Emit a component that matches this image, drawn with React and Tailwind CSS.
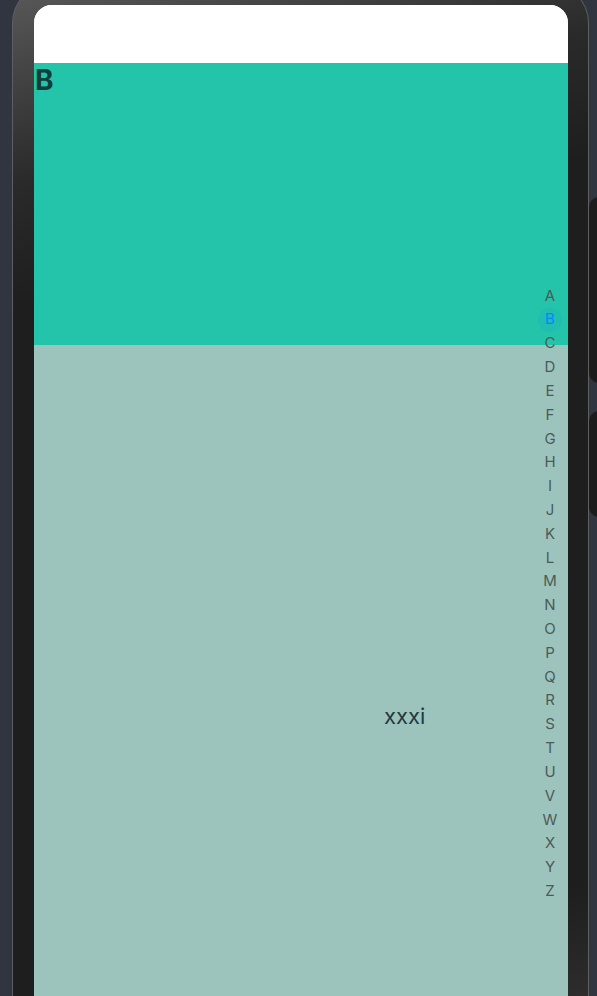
import React from 'react';

const LETTERS = 'ABCDEFGHIJKLMNOPQRSTUVWXYZ'.split('');

const IndexBar = ({ active = 'B' }) => (
  <div className="absolute right-0 top-[279px] w-[36px] flex flex-col items-center">
    {LETTERS.map((l) => (
      <div key={l} className="h-[23.82px] w-full flex items-center justify-center">
        {l === active ? (
          <span className="w-[24px] h-[24px] rounded-full bg-[#0a84ff]/10 text-[#0a84ff] text-[15px] flex items-center justify-center">
            {l}
          </span>
        ) : (
          <span className="text-[15px] text-[#4b5b58]">{l}</span>
        )}
      </div>
    ))}
  </div>
);

export default function App() {
  return (
    <div
      className="w-[597px] h-[996px] overflow-hidden bg-[#31353f] flex items-start pl-[12px]"
      style={{ fontFamily: 'Inter, "Noto Sans", sans-serif' }}
    >
      {/* phone body */}
      <div className="w-[577px] h-[1100px] -mt-[17px] shrink-0 rounded-[40px] border border-[#5f5f5f] bg-[linear-gradient(165deg,#5a5a5a_0%,#2a2a2a_16%,#1e1e1e_26%,#1e1e1e_84%,#3a3737_100%)] pl-[21px] pr-[19px] pt-[21px]">
        {/* screen */}
        <div className="relative w-[534px] h-[1100px] rounded-t-[18px] overflow-hidden bg-white">
          <div className="h-[58px] bg-white" />
          <div className="h-[282px] bg-[#23c4a9]">
            <div className="pl-px pt-[3px] text-[28px] font-bold leading-none text-[#0f3e3b]">B</div>
          </div>
          <div className="h-[800px] bg-[#9dc4bc] pl-[350px] pt-[355px]">
            <span className="text-[22px] text-[#1f3a42]">xxxi</span>
          </div>
          <IndexBar active="B" />
        </div>
      </div>
      {/* side keys */}
      <div className="flex flex-col shrink-0">
        <div className="mt-[197px] w-[12px] h-[186px] rounded-l-[10px] bg-[#1c1c1c]" />
        <div className="mt-[28px] w-[12px] h-[106px] rounded-l-[10px] bg-[#1c1c1c]" />
      </div>
    </div>
  );
}
